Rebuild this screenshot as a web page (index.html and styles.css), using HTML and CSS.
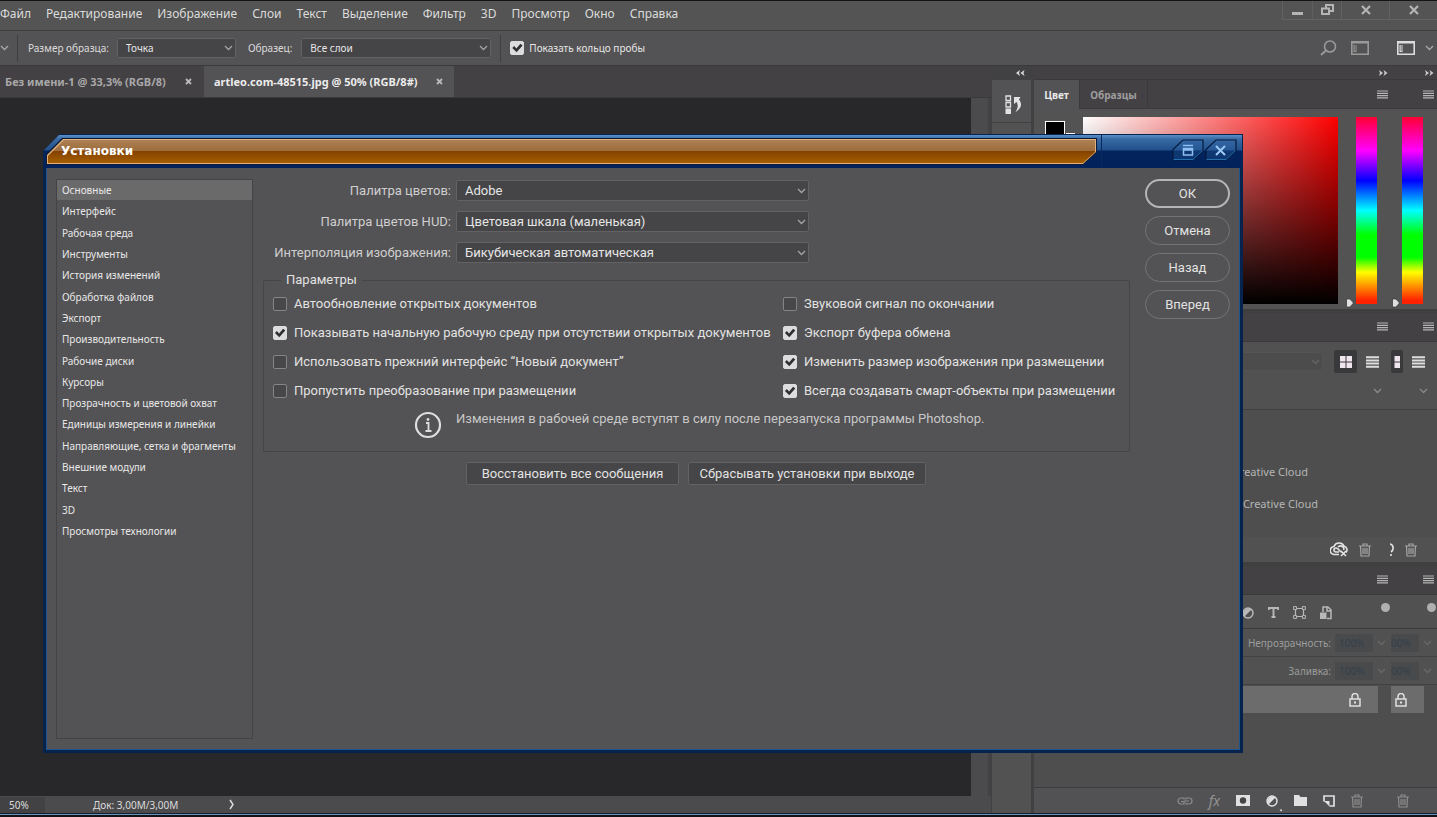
FILE: index.html
```html
<!DOCTYPE html>
<html lang="ru">
<head>
<meta charset="utf-8">
<title>Установки</title>
<link rel="stylesheet" href="styles.css">
</head>
<body>
<svg class="defs" aria-hidden="true">
  <symbol id="chev" viewBox="0 0 9 6"><path d="M1 1l3.500 3.500L8 1" fill="none" stroke="currentColor" stroke-width="1.300"/></symbol>
  <symbol id="burger" viewBox="0 0 11 9"><path d="M0 1h11M0 3.300h11M0 5.600h11M0 7.900h11" stroke="currentColor" stroke-width="1.200"/></symbol>
  <symbol id="fwd" viewBox="0 0 9 6"><path d="M0 0l4 3-4 3 1-3zM4.500 0l4 3-4 3 1-3z" fill="currentColor"/></symbol>
  <symbol id="trash" viewBox="0 0 12 14"><path d="M0 3h12M4 3V1h4v2M1.500 3l.5 10h8l.5-10M4 5v6M6 5v6M8 5v6" fill="none" stroke="currentColor" stroke-width="1.200"/></symbol>
  <symbol id="lock" viewBox="0 0 12 14"><path d="M1 6h10v7H1zM3 6V3.500a3 3 0 0 1 6 0V6" fill="none" stroke="currentColor" stroke-width="1.500"/><rect x="5" y="8.500" width="2" height="2" fill="currentColor"/></symbol>
  <symbol id="list" viewBox="0 0 13 12"><path d="M0 1.200h13M0 4.400h13M0 7.600h13M0 10.800h13" stroke="currentColor" stroke-width="2"/></symbol>
  <symbol id="grid" viewBox="0 0 12 12"><path d="M0 0h5.500v5.500H0zM6.500 0H12v5.500H6.500zM0 6.500h5.500V12H0zM6.500 6.500H12V12H6.500z" fill="currentColor"/></symbol>
  <symbol id="space" viewBox="0 0 18 14"><path d="M.8.800h16.400v12.400H.8z" fill="none" stroke="currentColor" stroke-width="1.600"/><path d="M1 1h16v1.500H1zM2.500 4h3v7h-3z" fill="currentColor"/><path d="M3.500 5h1.500M3.500 7h1.500M3.500 9h1.500" stroke="#444"/></symbol>
  <symbol id="adjust" viewBox="0 0 12 12"><circle cx="6" cy="6" r="5" fill="none" stroke="currentColor" stroke-width="1.500"/><path d="M9.500 2.500A5 5 0 0 1 2.500 9.500z" fill="currentColor" transform="rotate(180 6 6)"/></symbol>
  <symbol id="pin" viewBox="0 0 8 10"><path d="M.5 1h3.500l3.500 4L4 9H.5z" fill="#e0e0e0" stroke="#333" stroke-width=".7"/></symbol>
</svg>

<div class="app">
  <header class="menubar">
    <nav class="menu">
      <button>Файл</button><button>Редактирование</button><button>Изображение</button><button>Слои</button><button>Текст</button><button>Выделение</button><button>Фильтр</button><button>3D</button><button>Просмотр</button><button>Окно</button><button>Справка</button>
    </nav>
    <div class="winctl">
      <button class="narrow" aria-label="Свернуть"><svg width="11" height="12" viewBox="0 0 11 12"><path d="M0 9.500h11" stroke="currentColor" stroke-width="3"/></svg></button>
      <button class="narrow" aria-label="Восстановить"><svg width="13" height="12" viewBox="0 0 13 12"><path d="M5 4V1h7v6H9M1 4.500h7V10H1z" fill="none" stroke="currentColor" stroke-width="2"/></svg></button>
      <button aria-label="Закрыть"><svg width="10" height="10" viewBox="0 0 10 10"><path d="M1 1l8 8M9 1L1 9" stroke="currentColor" stroke-width="2.200"/></svg></button>
      <button aria-label="Закрыть окно"><svg width="10" height="10" viewBox="0 0 10 10"><path d="M1 1l8 8M9 1L1 9" stroke="currentColor" stroke-width="2.200"/></svg></button>
    </div>
  </header>

  <div class="options">
    <svg class="tool-chev" width="9" height="6"><use href="#chev"/></svg>
    <span class="rule"></span>
    <label for="sample-size">Размер образца:</label>
    <span class="pick size"><select id="sample-size"><option>Точка</option></select><svg width="9" height="6"><use href="#chev"/></svg></span>
    <label for="sample" class="second">Образец:</label>
    <span class="pick source"><select id="sample"><option>Все слои</option></select><svg width="9" height="6"><use href="#chev"/></svg></span>
    <span class="rule after"></span>
    <label class="ring"><input type="checkbox" class="tick" checked>Показать кольцо пробы</label>
    <div class="tools">
      <svg class="dim" width="17" height="16" viewBox="0 0 17 16"><circle cx="10" cy="6.500" r="5.500" fill="none" stroke="currentColor" stroke-width="1.600"/><path d="M6 10.500L1 15" stroke="currentColor" stroke-width="2"/></svg>
      <svg class="dim" width="18" height="14"><use href="#space"/></svg>
      <svg class="bright" width="18" height="14"><use href="#space"/></svg>
      <svg width="9" height="6"><use href="#chev"/></svg>
    </div>
  </div>

  <div class="work">
    <main class="doc">
      <div class="tabs">
        <div class="tab"><button>Без имени-1 @ 33,3% (RGB/8)</button><button class="x" aria-label="Закрыть вкладку"><svg width="7" height="7" viewBox="0 0 7 7"><path d="M1 1l5 5M6 1L1 6" stroke="currentColor" stroke-width="1.800"/></svg></button></div>
        <div class="tab active"><button>artleo.com-48515.jpg @ 50% (RGB/8#)</button><button class="x" aria-label="Закрыть вкладку"><svg width="7" height="7" viewBox="0 0 7 7"><path d="M1 1l5 5M6 1L1 6" stroke="currentColor" stroke-width="1.800"/></svg></button></div>
      </div>
      <div class="canvas"></div>
      <div class="status"><span class="zoom">50%</span><span class="size">Док: 3,00M/3,00M</span><svg width="6" height="11" viewBox="0 0 6 11"><path d="M1 1l3 4.500L1 10" fill="none" stroke="currentColor" stroke-width="1.500"/></svg></div>
    </main>

    <aside class="dock">
      <div class="dock-top"><svg width="9" height="6" viewBox="0 0 9 6"><path d="M4 0L0 3l4 3-1-3zM8.500 0l-4 3 4 3-1-3z" fill="currentColor"/></svg></div>
      <button class="dock-icon" aria-label="История"><svg width="17" height="20" viewBox="0 0 17 20"><path d="M1 1h4.500v4.500H1zM1 7.500h4.500V12H1z" fill="none" stroke="currentColor" stroke-width="1.300"/><path d="M.5 13.500h5.500V19H.5zM9 2h6.500L14 4.500c3.500 4.500 2.500 9-3.500 12.500 2.500-4 3-7 1-10L9 9z" fill="currentColor"/></svg></button>
      <div class="dock-rest"></div>
    </aside>

    <aside class="panels">
      <div class="split top"><div><svg width="9" height="6"><use href="#fwd"/></svg></div><div><svg width="9" height="6"><use href="#fwd"/></svg></div></div>
      <div class="split head">
        <div><button class="ptab on">Цвет</button><button class="ptab">Образцы</button><svg width="11" height="9"><use href="#burger"/></svg></div>
        <div><svg width="11" height="9"><use href="#burger"/></svg></div>
      </div>
      <div class="split color">
        <div><span class="swatches"><i class="back"></i><i class="fore"></i></span><span class="field"></span><svg class="pin" width="8" height="10"><use href="#pin"/></svg><span class="hue"></span></div>
        <div><svg class="pin" width="8" height="10"><use href="#pin"/></svg><span class="hue"></span></div>
      </div>
      <div class="split head seam"><div><svg width="11" height="9"><use href="#burger"/></svg></div><div><svg width="11" height="9"><use href="#burger"/></svg></div></div>
      <div class="split lib">
        <div>
          <div class="librow"><span class="pick library"><select aria-label="Библиотека" disabled><option></option></select><svg width="9" height="6"><use href="#chev"/></svg></span><span class="view"><svg width="12" height="12"><use href="#grid"/></svg></span><svg class="lines" width="13" height="12"><use href="#list"/></svg></div>
          <div class="subrow"><svg width="9" height="6"><use href="#chev"/></svg></div>
        </div>
        <div>
          <div class="librow"><span class="view half"><svg width="6" height="12" viewBox="6 0 6 12"><path d="M6.500 0H12v5.500H6.500zM6.500 6.500H12V12H6.500z" fill="currentColor"/></svg></span><svg class="lines" width="13" height="12"><use href="#list"/></svg></div>
          <div class="subrow"><svg width="9" height="6"><use href="#chev"/></svg></div>
        </div>
      </div>
      <div class="cloud"><p class="short">Creative Cloud</p><p>Creative Cloud</p></div>
      <div class="split libfoot">
        <div><svg class="cc" width="19" height="15" viewBox="0 0 19 15"><path d="M9 12.500H4.500a4 4 0 0 1-.5-8 5.500 5.500 0 0 1 10-.5 4 4 0 0 1 2 6.500M9 10H6a2 2 0 0 1 0-4c3 0 3 4 6 4M8 5c3-2.500 7 0 5.500 3" fill="none" stroke="currentColor" stroke-width="1.600"/><path d="M11 9l5 5M16 9l-5 5" stroke="currentColor" stroke-width="1.600"/></svg><svg width="12" height="14"><use href="#trash"/></svg></div>
        <div><svg class="cc" width="5" height="14" viewBox="0 0 5 14"><path d="M0 1c4 1 4 6 1 8M1 11v2" fill="none" stroke="currentColor" stroke-width="1.600"/></svg><svg width="12" height="14"><use href="#trash"/></svg></div>
      </div>
      <div class="split head seam"><div><svg width="11" height="9"><use href="#burger"/></svg></div><div><svg width="11" height="9"><use href="#burger"/></svg></div></div>
      <div class="split filter">
        <div>
          <svg width="12" height="12"><use href="#adjust"/></svg>
          <svg width="11" height="11" viewBox="0 0 11 11"><path d="M.8 3V1h9.400v2M5.500 1v9M3.500 10h4" fill="none" stroke="currentColor" stroke-width="1.900"/></svg>
          <svg width="13" height="13" viewBox="0 0 13 13"><path d="M2.500 2.500h8v8h-8z" fill="none" stroke="currentColor" stroke-width="1.200"/><path d="M.6.600h3v3h-3zM9.400.600h3v3h-3zM.6 9.400h3v3h-3zM9.400 9.400h3v3h-3z" fill="#505150" stroke="currentColor"/></svg>
          <svg width="12" height="14" viewBox="0 0 12 14"><path d="M3 6V1h5l3 3v8.500H7M7 1v4h4" fill="none" stroke="currentColor" stroke-width="1.500"/><path d="M0 6.500h6.500V13H0z" fill="currentColor"/></svg>
          <span class="dot"></span>
        </div>
        <div><span class="dot"></span></div>
      </div>
      <div class="split value">
        <div><label for="opacity">Непрозрачность:</label><input id="opacity" value="100%" disabled><svg width="9" height="6"><use href="#chev"/></svg></div>
        <div><input aria-label="Непрозрачность" value="00%" disabled><svg width="9" height="6"><use href="#chev"/></svg></div>
      </div>
      <div class="split value">
        <div><label for="fill">Заливка:</label><input id="fill" value="100%" disabled><svg width="9" height="6"><use href="#chev"/></svg></div>
        <div><input aria-label="Заливка" value="00%" disabled><svg width="9" height="6"><use href="#chev"/></svg></div>
      </div>
      <div class="split layer"><div><svg width="12" height="14"><use href="#lock"/></svg></div><div><svg width="12" height="14"><use href="#lock"/></svg></div></div>
      <div class="empty"></div>
      <div class="split foot">
        <div>
          <svg class="dim" width="16" height="8" viewBox="0 0 16 8"><path d="M7 2.500V1H4a3 3 0 0 0 0 6h3V4.500H4M9 2.500V1h3a3 3 0 0 1 0 6H9V5.500M7 4h5" fill="none" stroke="currentColor" stroke-width="1.200"/></svg>
          <span class="fx">fx</span>
          <svg width="14" height="11" viewBox="0 0 14 11"><path d="M0 0h14v11H0z" fill="currentColor"/><circle cx="7" cy="5.500" r="3.200" fill="#444"/></svg>
          <svg class="more" width="16" height="22" viewBox="0 0 16 22"><g transform="translate(0 5)"><circle cx="6" cy="6" r="5" fill="none" stroke="currentColor" stroke-width="1.500"/><path d="M2.500 9.500A5 5 0 0 1 9.500 2.500z" fill="currentColor"/></g><path d="M13.500 19.500h3l-1.500 2z" fill="currentColor"/></svg>
          <svg width="13" height="11" viewBox="0 0 13 11"><path d="M0 0h5l1.500 2H13v9H0z" fill="currentColor"/></svg>
          <svg width="12" height="12" viewBox="0 0 12 12"><path d="M1 6.500V1h10v10H6.500" fill="none" stroke="currentColor" stroke-width="1.700"/><path d="M1 6h5.500v5.500z" fill="currentColor"/></svg>
          <svg class="dim" width="12" height="14"><use href="#trash"/></svg>
        </div>
        <div><svg class="dim" width="12" height="14"><use href="#trash"/></svg></div>
      </div>
    </aside>
  </div>
  <div class="taskbar"></div>
</div>

<section class="dialog" role="dialog" aria-labelledby="dialog-title">
  <header class="titlebar">
    <div class="plate-edge"><div class="plate-rim"><div class="plate"><h1 id="dialog-title">Установки</h1></div></div></div>
    <div class="caption">
      <button aria-label="Свернуть"><svg width="32" height="22" viewBox="0 0 32 22"><path d="M1 21V10.500L11 1h20v10.500L21 21z" fill="#2f6aa8" fill-opacity=".3" stroke="#061a3c" stroke-width="1.200"/><path d="M1.500 20.500H21l9.500-9" fill="none" stroke="#2470ae"/><path d="M11 6.500h10M11.500 9.500h9v6.500h-9zM11 11h10" fill="none" stroke="#8ec0f2" stroke-width="1.500"/></svg></button>
      <button aria-label="Закрыть"><svg width="32" height="22" viewBox="0 0 32 22"><path d="M1 21V10.500L11 1h20v10.500L21 21z" fill="#2f6aa8" fill-opacity=".3" stroke="#061a3c" stroke-width="1.200"/><path d="M1.500 20.500H21l9.500-9" fill="none" stroke="#2470ae"/><path d="M11 7l9 9M20 7l-9 9" stroke="#9cc8f6" stroke-width="2"/></svg></button>
    </div>
  </header>
  <div class="body">
    <nav class="sections">
      <ul>
        <li><button class="current">Основные</button></li>
        <li><button>Интерфейс</button></li>
        <li><button>Рабочая среда</button></li>
        <li><button>Инструменты</button></li>
        <li><button>История изменений</button></li>
        <li><button>Обработка файлов</button></li>
        <li><button>Экспорт</button></li>
        <li><button>Производительность</button></li>
        <li><button>Рабочие диски</button></li>
        <li><button>Курсоры</button></li>
        <li><button>Прозрачность и цветовой охват</button></li>
        <li><button>Единицы измерения и линейки</button></li>
        <li><button>Направляющие, сетка и фрагменты</button></li>
        <li><button>Внешние модули</button></li>
        <li><button>Текст</button></li>
        <li><button>3D</button></li>
        <li><button>Просмотры технологии</button></li>
      </ul>
    </nav>
    <form class="settings">
      <div class="choices">
        <label for="picker">Палитра цветов:</label>
        <span class="pick"><select id="picker"><option>Adobe</option></select><svg width="9" height="6"><use href="#chev"/></svg></span>
        <label for="hud">Палитра цветов HUD:</label>
        <span class="pick"><select id="hud"><option>Цветовая шкала (маленькая)</option></select><svg width="9" height="6"><use href="#chev"/></svg></span>
        <label for="interp">Интерполяция изображения:</label>
        <span class="pick"><select id="interp"><option>Бикубическая автоматическая</option></select><svg width="9" height="6"><use href="#chev"/></svg></span>
      </div>
      <fieldset>
        <legend>Параметры</legend>
        <div class="checks">
          <label><input type="checkbox" class="tick">Автообновление открытых документов</label>
          <label><input type="checkbox" class="tick">Звуковой сигнал по окончании</label>
          <label><input type="checkbox" class="tick" checked>Показывать начальную рабочую среду при отсутствии открытых документов</label>
          <label><input type="checkbox" class="tick" checked>Экспорт буфера обмена</label>
          <label><input type="checkbox" class="tick">Использовать прежний интерфейс “Новый документ”</label>
          <label><input type="checkbox" class="tick" checked>Изменить размер изображения при размещении</label>
          <label><input type="checkbox" class="tick">Пропустить преобразование при размещении</label>
          <label><input type="checkbox" class="tick" checked>Всегда создавать смарт-объекты при размещении</label>
        </div>
        <div class="note">
          <svg width="28" height="28" viewBox="0 0 28 28"><circle cx="14" cy="14" r="12" fill="none" stroke="currentColor" stroke-width="2.200"/><path d="M12 12h2.500v8M11.500 20h6" fill="none" stroke="currentColor" stroke-width="1.800"/><circle cx="14" cy="8.500" r="1.400" fill="currentColor"/></svg>
          <p>Изменения в рабочей среде вступят в силу после перезапуска программы Photoshop.</p>
        </div>
      </fieldset>
      <div class="resets">
        <button type="button" class="wide-a">Восстановить все сообщения</button>
        <button type="button" class="wide-b">Сбрасывать установки при выходе</button>
      </div>
    </form>
    <div class="actions">
      <button class="primary">ОК</button>
      <button>Отмена</button>
      <button>Назад</button>
      <button>Вперед</button>
    </div>
  </div>
</section>
</body>
</html>
```
FILE: styles.css
```css
* { box-sizing: border-box; }
body {
  margin: 0;
  height: 100vh;
  position: relative;
  overflow: hidden;
  background: #28272a;
  color: #dcdcdc;
  font: 12px/16px "Noto Sans", "Open Sans", sans-serif;
}
button, select, input { font: inherit; color: inherit; margin: 0; }
button { background: none; border: 0; padding: 0; white-space: nowrap; }
svg { display: block; flex: none; }
h1, p, ul { margin: 0; padding: 0; }
.defs { position: absolute; width: 0; height: 0; }

.app { height: 100%; display: flex; flex-direction: column; border-top: 1px solid #141414; }

/* menu bar */
.menubar { display: flex; justify-content: space-between; height: 30px; background: #535453; border-bottom: 1px solid #3f3f3f; }
.menu { display: flex; gap: 15px; align-items: center; padding-bottom: 3px; }
.winctl { display: flex; height: 19px; border: 1px solid #626262; border-width: 0 0 1px 1px; color: #b4b5b4; }
.winctl button { width: 48px; display: flex; justify-content: center; align-items: center; border-left: 1px solid #626262; }
.winctl .narrow { width: 29px; border-left-color: #5f5f5f; }
.winctl button:first-child { border-left: 0; }

/* options bar */
.options { display: flex; align-items: center; height: 35px; background: #535254; border-bottom: 1px solid #3b3a3b; font-size: 10px; }
.tool-chev { color: #aaa; }
.rule { width: 1px; height: 27px; background: #3f3f40; margin: 0 10px 0 8px; }
.rule.after { margin: 0 9px; }
.pick { display: grid; align-items: center; }
.pick select, .pick svg { grid-area: 1 / 1; }
.pick svg { justify-self: end; margin-right: 3px; color: #a5a5a5; pointer-events: none; }
.pick select { appearance: none; width: 100%; height: 20px; padding: 0 8px; background: #454446; border: 1px solid #626163; border-radius: 2px; outline: 0; color: #e6e6e6; }
.options .size { width: 119px; margin: 0 12px 0 8px; }
.options .source { width: 190px; margin-left: 9px; }
.ring { display: flex; align-items: center; gap: 5px; color: #e6e6e6; }
.tools { margin-left: auto; display: flex; align-items: center; gap: 14px; padding-right: 3px; color: #aaa; }
.tools .dim { color: #999; }
.tools .bright { color: #ddd; margin: 0 -4px 0 14px; }

.tick { appearance: none; width: 14px; height: 14px; flex: none; background: #474648; border: 1px solid #858486; border-radius: 2px; display: grid; }
.tick:checked { background: #dcdbdd; border-color: #dcdbdd; }
.tick:checked::before { content: ""; background: #303032; clip-path: polygon(8% 50%, 24% 34%, 42% 54%, 76% 14%, 94% 30%, 44% 86%); }

/* document area */
.work { flex: 1; min-height: 0; display: flex; }
.doc { flex: 1; min-width: 0; display: flex; flex-direction: column; background: #434143; }
.tabs { display: flex; height: 32px; border-bottom: 1px solid #3b3a3b; font-size: 11px; font-weight: 700; color: #a9a8a9; }
.tab { display: flex; align-items: center; justify-content: space-between; width: 204px; padding: 0 12px 0 5px; }
.tab.active { width: 250px; padding: 0 11px 0 10px; background: #535254; color: #ececec; }
.tab .x { color: #b9b9b9; }
.canvas { flex: 1; background: #28272a; border-right: 17px solid #4b4a4c; margin-right: 3px; }
.status { display: flex; align-items: center; height: 17px; background: #4b4a4c; font-size: 10px; }
.zoom { width: 45px; padding-left: 9px; background: #424143; }
.status .size { padding-left: 48px; width: 184px; }

/* icon dock */
.dock { width: 43px; display: flex; flex-direction: column; background: #414042; padding: 0 3px 0 1px; }
.dock-top { height: 14px; display: flex; align-items: center; justify-content: end; padding-right: 6px; }
.dock-icon { height: 42px; background: #535254; display: flex; justify-content: center; align-items: end; padding: 0 0 7px 3px; color: #e2e2e2; }
.dock-rest { flex: 1; background: #515251; margin-top: 1px; }

/* panels */
.panels { width: 403px; display: flex; flex-direction: column; background: #4d4e4d; color: #b0b0b0; }
.split { display: grid; grid-template-columns: minmax(0, 1fr) 46px; }
.split > div { display: flex; align-items: center; justify-content: end; min-width: 0; }
.top { height: 14px; background: #434143; border-bottom: 1px solid #3b3a3b; color: #ccc; }
.top > div { padding-right: 3px; }
.head { height: 29px; background: #434143; border-bottom: 1px solid #3b3a3b; }
.head > div { padding-right: 3px; }
.head svg { margin-left: auto; color: #b5b5b5; }
.ptab { height: 29px; width: 68px; font-weight: 700; font-size: 10px; border-right: 1px solid #3b3a3b; color: #9f9e9f; }
.ptab.on { width: 46px; background: #535254; color: #e8e8e8; }
.color { height: 200px; padding: 8px 0 5px; background: #525352; }
.split.color > div { align-items: stretch; padding-right: 14px; }
.swatches { display: grid; width: 38px; margin: 4px auto 0 11px; align-content: start; justify-content: start; }
.swatches i { grid-area: 1 / 1; }
.fore { width: 20px; height: 20px; background: #000; border: 1px solid #fff; outline: 1px solid #555; }
.back { width: 20px; height: 20px; background: #fff; margin: 12px 0 0 10px; }
.field { width: 257px; background: linear-gradient(transparent, #000), linear-gradient(90deg, #fff, #f00); }
.pin { align-self: end; margin: 0 2px -4px 0; }
.field + .pin { margin-left: 8px; }
.hue { flex: none; width: 21px; background: linear-gradient(#f03, #f0f 18%, #00f 34%, #0ff 50%, #0f0 63%, #0f0 75%, #ff0 83%, #f20 98%); }
.seam { height: 33px; border-top: 4px solid #3f3f3f; padding-bottom: 1px; }
.lib { height: 68px; background: #515151; border-bottom: 1px solid #404040; }
.lib > div { flex-direction: column; align-items: stretch; }
.split.lib > div { justify-content: start; padding-top: 8px; }
.librow { display: flex; align-items: center; justify-content: end; gap: 9px; height: 23px; padding-right: 12px; }
.library { width: 200px; margin-right: 2px; }
.library select { height: 19px; background: #4b4b4b; border-color: #565656; }
.view { display: grid; place-items: center; width: 23px; height: 23px; background: #39383a; border-radius: 2px; color: #f0e6ee; }
.view.half { width: 12px; }
.lines { color: #dedede; }
.subrow { display: flex; justify-content: end; padding: 15px 9px 0 0; color: #8a8a8a; }
.cloud { height: 127px; padding: 54px 119px 0 0; color: #b5b5b5; font-size: 11px; display: flex; flex-direction: column; gap: 16px; align-items: end; }
.cloud .short { margin-right: 10px; }
.libfoot { height: 25px; background: #515151; }
.libfoot > div { gap: 10px; padding-right: 20px; color: #a5a5a5; }
.cc { color: #e4e4e4; }
.filter { height: 34px; background: #505150; border-bottom: 1px solid #3c3c3c; }
.filter > div { gap: 14px; padding: 2px 1px 0 0; color: #b8b8b8; }
.dot { width: 9px; height: 9px; border-radius: 50%; background: #b0b0b0; margin: 0 0 10px 35px; }
.value { height: 28px; background: #505150; border-bottom: 1px solid #424242; font-size: 10px; }
.value > div { gap: 4px; padding-right: 5px; color: #9c9c9c; }
.value input { width: 38px; height: 18px; padding: 0 4px; border: 0; background: #484a4b; color: #34404d; }
.value div + div input { width: 28px; padding: 0; }
.value svg { color: #686868; }
.layer { height: 29px; padding: 1px 0; color: #dedede; }
.layer > div { background: #6b6c6b; padding-right: 17px; margin-right: 13px; }
.empty { flex: 1; }
.foot { height: 26px; background: #525153; border-top: 1px solid #3d3d3d; color: #e0e0e0; }
.foot > div { gap: 16px; padding-right: 28px; }
.foot .more { margin-right: -4px; }
.foot .dim { color: #8d8d8d; }
.foot .fx { font: italic 14px/14px "Noto Sans", sans-serif; color: #949494; }
.taskbar { height: 4px; background: linear-gradient(#142030 1px, #6f94b8 1px 2px, #101418 2px); }

/* preferences window */
.dialog {
  position: absolute;
  inset: 134px 194px 64px 43px;
  display: flex;
  flex-direction: column;
  padding: 1px;
  background: #06234d;
  clip-path: polygon(17px 0, 100% 0, 100% 100%, 0 100%, 0 17px);
}
.titlebar { display: flex; height: 33px; background: linear-gradient(#5a8fc9, #396aa3 4px, #21508c 15px, #02235c 16px, #01225b); padding-right: 5px; }
.plate-edge { flex: 1; margin: 3px 0 3px 2px; padding: 1px; background: #0b1c3a; clip-path: polygon(16px 0, 100% 0, 100% 15px, calc(100% - 14px) 100%, 0 100%, 0 16px); }
.plate-rim { height: 100%; padding: 1px; background: #e2b07a; clip-path: polygon(16px 0, 100% 0, 100% 13px, calc(100% - 13px) 100%, 0 100%, 0 16px); }
.plate { height: 100%; display: flex; align-items: center; padding: 0 0 2px 13px; background: linear-gradient(#ab8153, #9f6c3c 11px, #834100 11px, #a65f00); clip-path: polygon(16px 0, 100% 0, 100% 12px, calc(100% - 12px) 100%, 0 100%, 0 16px); }
.plate h1 { font: 700 12px/16px "DejaVu Sans", sans-serif; color: #fff; }
.caption { display: flex; align-items: start; gap: 1px; padding: 4px 0 0 70px; margin-left: 4px; border-left: 1px solid #092a5e; }
.body { flex: 1; min-height: 0; display: flex; align-items: start; margin: 0 2px 2px; border: 1px solid #20548f; border-top: 0; background: #535254; padding: 11px 9px 10px; }
.sections { align-self: stretch; width: 197px; border: 1px solid #434244; flex: none; }
.sections ul { list-style: none; display: flex; flex-direction: column; justify-content: space-between; height: 361px; }
.sections button { display: block; width: 100%; height: 20px; padding-left: 5px; text-align: left; font-size: 10px; color: #e8e8e8; }
.sections .current { background: #6b6a6b; }
.settings { flex: 1; max-width: 867px; margin-left: 10px; padding-top: 1px; color: #e2e2e2; }
.settings, .actions { font-family: Roboto, "Noto Sans", sans-serif; font-size: 13px; }
.choices { display: grid; grid-template-columns: 188px 353px; gap: 10px 5px; align-items: center; }
.choices label { text-align: right; white-space: nowrap; color: #cfcfcf; }
.choices select { height: 21px; }
fieldset { margin: 9px 0 0; border: 1px solid #454446; padding: 6px 9px 12px; border-radius: 2px; }
legend { padding: 0 5px; margin-left: 8px; }
.checks { display: grid; grid-template-columns: 510px 1fr; gap: 9px 0; }
.checks label { display: flex; align-items: center; gap: 7px; height: 20px; white-space: nowrap; }
.note { display: flex; gap: 14px; margin: 10px 0 0 141px; color: #c8c8c8; }
.note svg { color: #dedede; }
.resets { display: flex; gap: 9px; margin: 10px 0 0 203px; }
.resets button { height: 23px; background: #464547; border: 1px solid #626163; border-radius: 2px; color: #e2e2e2; }
.wide-a { width: 213px; }
.wide-b { width: 238px; }
.actions { display: flex; flex-direction: column; gap: 8px; width: 85px; margin-left: auto; }
.actions button { height: 29px; border: 1px solid #757476; border-radius: 15px; color: #e2e2e2; }
.actions .primary { border: 2px solid #b5b4b6; }
```
